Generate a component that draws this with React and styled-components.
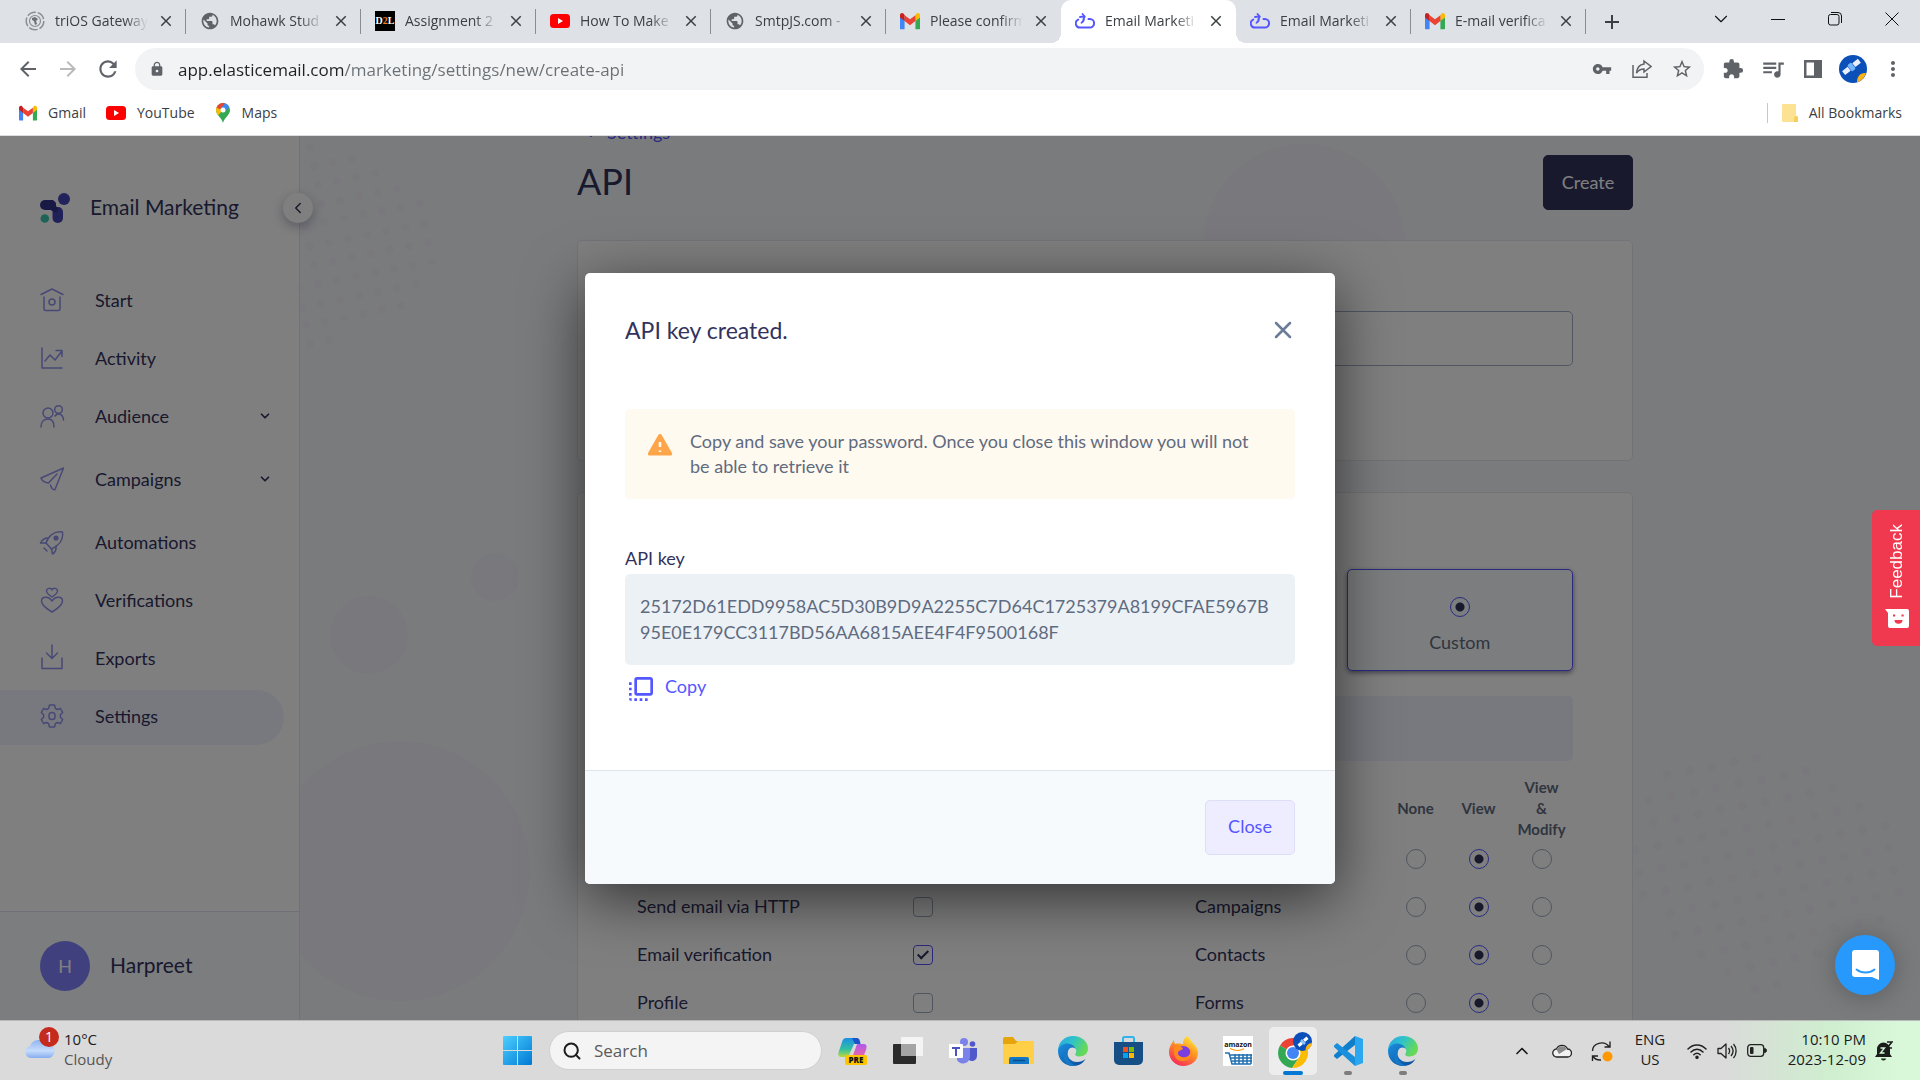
import React from "react";
import styled, { createGlobalStyle, css } from "styled-components";
import {
  MdArrowBack, MdArrowForward, MdRefresh, MdLock, MdVpnKey, MdStarBorder, MdExtension,
  MdQueueMusic, MdMoreVert, MdPublic, MdFlipToFront, MdClose, MdAdd,
} from "react-icons/md";
import { ChevronDown, ChevronLeft, ChevronUp, Search, X } from "lucide-react";

const uiFont = '"Open Sans", "Noto Sans", sans-serif';
const appFont = 'Lato, "Open Sans", sans-serif';
const primary = "#5457ff";
const navy = "#32325d";
const slate = "#5f6b7f";

const GlobalStyle = createGlobalStyle`
  *, *::before, *::after { box-sizing: border-box; }
  body { margin: 0; overflow: hidden; font-family: ${uiFont}; }
  button, input { font: inherit; color: inherit; }
  button { border: 0; background: none; padding: 0; cursor: pointer; }
  a { color: inherit; text-decoration: none; }
  svg { display: block; flex: none; }
`;

const Screen = styled.div`
  display: flex;
  flex-direction: column;
  height: 100vh;
`;

/* ---------- Browser chrome ---------- */

const TabStrip = styled.div`
  display: flex;
  align-items: stretch;
  height: 43px;
  padding-left: 11px;
  background: #dee1e6;
  color: #3c4043;
`;

const Tab = styled.div`
  position: relative;
  display: flex;
  align-items: center;
  flex: 0 1 175px;
  min-width: 0;
  padding: 0 12px 2px 14px;
  gap: 10px;
  font-size: 14px;
  ${(p) => p.$divider && css`
    &::after {
      content: "";
      position: absolute;
      right: 0;
      top: 9px;
      width: 1px;
      height: 25px;
      background: #8a8d92;
    }
  `}
  ${(p) => p.$active && css`
    background: #fff;
    border-radius: 10px 10px 0 0;
    &::before, &::after {
      content: "";
      position: absolute;
      bottom: 0;
      width: 10px;
      height: 10px;
    }
    &::before { left: -10px; background: radial-gradient(circle at 0 0, transparent 10px, #fff 10px); }
    &::after { right: -10px; background: radial-gradient(circle at 100% 0, transparent 10px, #fff 10px); }
  `}
`;

const TabTitle = styled.span`
  flex: 1;
  min-width: 0;
  overflow: hidden;
  white-space: nowrap;
  mask-image: linear-gradient(90deg, #000 75%, transparent);
`;

const TabClose = styled.button`
  display: flex;
  width: 16px;
  justify-content: center;
`;

const NewTab = styled.button`
  display: flex;
  align-items: center;
  justify-content: center;
  width: 52px;
`;

const WindowControls = styled.div`
  display: flex;
  margin-left: auto;
  color: #111;
`;

const WindowButton = styled.button`
  display: flex;
  align-items: center;
  justify-content: center;
  width: 57px;
  height: 38px;
`;

const Toolbar = styled.div`
  display: flex;
  align-items: center;
  height: 52px;
  padding: 0 7px 0 8px;
  background: #fff;
  color: #5f6368;
`;

const ToolButton = styled.button`
  display: flex;
  align-items: center;
  justify-content: center;
  width: 40px;
  height: 40px;
  color: ${(p) => (p.$muted ? "#bababc" : "inherit")};
`;

const AddressBar = styled.div`
  display: flex;
  align-items: center;
  flex: 1;
  height: 42px;
  margin: 0 9px 0 7px;
  padding: 0 2px 0 14px;
  border-radius: 21px;
  background: #f1f3f4;
`;

const AddressInput = styled.input`
  flex: 1;
  min-width: 0;
  height: 30px;
  margin-left: 13px;
  padding: 0;
  border: 0;
  outline: 0;
  font-size: 17px;
  background: linear-gradient(90deg, #202124 166px, #6b7075 166px);
  background-clip: text;
  -webkit-text-fill-color: transparent;
`;

const Bookmarks = styled.nav`
  display: flex;
  align-items: center;
  height: 41px;
  padding: 0 18px 5px 19px;
  gap: 20px;
  border-bottom: 1px solid #dadce0;
  background: #fff;
  color: #3c4043;
  font-size: 14px;
`;

const Bookmark = styled.a`
  display: flex;
  align-items: center;
  gap: 11px;
  ${(p) => p.$end && css`
    margin-left: auto;
    padding-left: 14px;
    border-left: 1px solid #c4c7cb;
    height: 20px;
  `}
`;

/* ---------- Web page ---------- */

const Page = styled.div`
  position: relative;
  display: flex;
  flex: 1;
  min-height: 0;
  overflow: hidden;
  font-family: ${appFont};
  color: ${navy};
`;

const Sidebar = styled.aside`
  position: relative;
  z-index: 1;
  display: flex;
  flex-direction: column;
  flex: none;
  width: 300px;
  border-right: 1px solid #e0e4ee;
  background: #fff;
`;

const Brand = styled.div`
  display: flex;
  align-items: center;
  gap: 20px;
  padding: 55px 0 2px 40px;
  font-size: 21px;
  line-height: 32px;
  span { padding-bottom: 2px; }
`;

const CollapseButton = styled.button`
  position: absolute;
  top: 57px;
  right: -14px;
  display: flex;
  align-items: center;
  justify-content: center;
  width: 30px;
  height: 30px;
  border-radius: 50%;
  background: #fff;
  box-shadow: 0 4px 12px rgba(50, 50, 93, 0.35);
`;

const Nav = styled.nav`
  display: flex;
  flex-direction: column;
  padding: 47px 15px 0 0;
`;

const NavItem = styled.a`
  display: flex;
  align-items: center;
  gap: 31px;
  height: 55px;
  margin-bottom: ${(p) => (p.$expandable ? "8px" : "3px")};
  padding: 0 12px 4px 40px;
  border-radius: 0 28px 28px 0;
  background: ${(p) => (p.$active ? "#f1f3fe" : "transparent")};
  font-size: 18px;
  & > svg:last-child:not(:first-child) { margin-left: auto; }
`;

const NavIcon = styled.svg`
  width: 24px;
  height: 24px;
  overflow: visible;
  fill: none;
  stroke: #8f91ea;
  stroke-width: 1.5;
  stroke-linecap: round;
  stroke-linejoin: round;
`;

const Account = styled.div`
  display: flex;
  align-items: center;
  gap: 20px;
  height: 109px;
  margin-top: auto;
  padding-left: 40px;
  border-top: 1px solid #dfe3ec;
  background: #f6fafd;
  font-size: 21px;
  & > span:last-child { padding-bottom: 3px; }
`;

const Avatar = styled.span`
  display: flex;
  align-items: center;
  justify-content: center;
  width: 50px;
  height: 50px;
  border-radius: 50%;
  background: #7f80fb;
  color: #fff;
  font-size: 18px;
`;

const Main = styled.main`
  position: relative;
  flex: 1;
  min-width: 0;
  padding: 0 40px 0 30px;
  overflow: hidden;
  background: #f4f7fa;
`;

const Decor = styled.svg`
  position: absolute;
  top: 0;
  ${(p) => p.$side}: 0;
  width: ${(p) => p.$width}px;
  height: 884px;
  fill: #f3f0f9;
`;

const Content = styled.div`
  position: relative;
  max-width: 1056px;
  margin: -18px auto 0;
`;

const BackLink = styled.a`
  display: inline-flex;
  align-items: center;
  gap: 10px;
  padding-left: 4px;
  color: ${primary};
  font-size: 18px;
  line-height: 28px;
`;

const PageHeader = styled.header`
  display: flex;
  align-items: center;
  justify-content: space-between;
  margin: 9px 0 30px;
  h1 { margin: 0; padding-bottom: 4px; font-size: 36px; font-weight: 400; line-height: 44px; }
`;

const Button = styled.button`
  min-width: 90px;
  height: 55px;
  padding: 0 16px 2px;
  border-radius: 5px;
  border: 1px solid ${(p) => (p.$soft ? "#dddef8" : navy)};
  background: ${(p) => (p.$soft ? "#ededff" : navy)};
  color: ${(p) => (p.$soft ? primary : "#fff")};
  font-size: 18px;
`;

const Card = styled.section`
  margin-bottom: 31px;
  padding: ${(p) => p.$padTop}px 59px 94px;
  border: 1px solid #e3e7ef;
  border-radius: 5px;
  background: #fff;
`;

const NameInput = styled.input`
  display: block;
  width: 100%;
  height: 55px;
  padding: 0 16px;
  border: 1px solid #a3afc4;
  border-radius: 5px;
  background: #fff;
`;

const AccessGrid = styled.div`
  display: grid;
  grid-template-columns: repeat(4, 1fr);
  gap: 10px;
`;

const AccessOption = styled.label`
  display: flex;
  flex-direction: column;
  align-items: center;
  gap: 14px;
  height: 102px;
  padding-top: 27px;
  border: 1px solid ${(p) => (p.$selected ? primary : "#e3e7ef")};
  border-radius: 5px;
  background: ${(p) => (p.$selected ? "#f6fafd" : "#fff")};
  box-shadow: ${(p) => (p.$selected ? "0 2px 5px rgba(50, 50, 93, 0.6)" : "none")};
  color: ${slate};
  font-size: 18px;
`;

const Banner = styled.div`
  height: 65px;
  margin: 25px 0 13px;
  border-radius: 5px;
  background: #f1f3fe;
`;

const Permissions = styled.div`
  display: flex;
  align-items: flex-end;
  justify-content: space-between;
`;

const Table = styled.table`
  width: 378px;
  border-collapse: collapse;
  table-layout: fixed;
  font-size: 18px;
  line-height: 20px;
  th, td { padding: 0; }
  thead th {
    height: 69px;
    color: ${slate};
    font-size: 15px;
    font-weight: 700;
    line-height: 21px;
  }
  tbody tr { height: 48px; }
  tbody th { padding-top: 5px; text-align: left; vertical-align: top; font-weight: 400; }
  tbody td { padding-top: 6px; vertical-align: top; }
`;

const LabelCol = styled.col`
  width: ${(p) => p.$w}px;
`;

const Radio = styled.input.attrs({ type: "radio" })`
  appearance: none;
  display: block;
  width: 20px;
  height: 20px;
  margin: 0 auto;
  border: 1px solid #a0acbc;
  border-radius: 50%;
  &:checked {
    border-color: ${primary};
    background: radial-gradient(circle, ${navy} 4px, transparent 5px);
  }
`;

const AccessRadio = styled(Radio)`
  flex: none;
`;

const Checkbox = styled.input.attrs({ type: "checkbox" })`
  appearance: none;
  position: relative;
  display: block;
  width: 20px;
  height: 20px;
  margin: 0;
  border: 1px solid #a0acbc;
  border-radius: 4px;
  &:checked { border-color: ${primary}; }
  &:checked::after {
    content: "";
    position: absolute;
    left: 6px;
    top: 2px;
    width: 6px;
    height: 11px;
    border: solid ${navy};
    border-width: 0 2px 2px 0;
    transform: rotate(45deg);
  }
`;

const Backdrop = styled.div`
  position: absolute;
  inset: 0;
  z-index: 2;
  display: flex;
  align-items: center;
  justify-content: center;
  background: rgba(0, 0, 0, 0.5);
`;

const Dialog = styled.div`
  width: 750px;
  border-radius: 5px;
  overflow: hidden;
  background: #fff;
  box-shadow: 0 14px 60px rgba(0, 0, 0, 0.6);
`;

const DialogHeader = styled.div`
  display: flex;
  align-items: center;
  justify-content: space-between;
  padding: 42px 38px 0 40px;
  h2 { margin: 0; font-size: 23px; font-weight: 400; line-height: 30px; }
  button { display: flex; color: #6b7c98; }
`;

const DialogBody = styled.div`
  padding: 64px 40px 65px;
  font-size: 18px;
`;

const Alert = styled.div`
  display: flex;
  gap: 17px;
  min-height: 90px;
  padding: 20px 30px 20px 22px;
  border-radius: 5px;
  background: #fffaf0;
  color: ${slate};
  line-height: 25px;
  svg { margin-top: 4px; }
  p { margin: 0; }
`;

const FieldLabel = styled.div`
  margin-top: 45px;
  padding-bottom: 2px;
  line-height: 28px;
  font-size: 18px;
`;

const KeyValue = styled.output`
  display: block;
  min-height: 91px;
  padding: 19px 25px 20px 15px;
  border-radius: 5px;
  background: #ecf1f6;
  color: ${slate};
  line-height: 26px;
  word-break: break-all;
`;

const CopyButton = styled.button`
  display: flex;
  align-items: center;
  gap: 8px;
  height: 32px;
  margin: 8px 0 0;
  color: ${primary};
  span { padding-bottom: 6px; }
`;

const DialogFooter = styled.div`
  display: flex;
  justify-content: flex-end;
  padding: 29px 40px;
  border-top: 1px solid #dfe4ec;
  background: #f6fafd;
  font-size: 18px;
`;

const FeedbackTab = styled.button`
  position: absolute;
  z-index: 3;
  right: 0;
  top: 374px;
  display: flex;
  flex-direction: column;
  align-items: center;
  justify-content: space-between;
  width: 48px;
  height: 136px;
  padding: 14px 0 17px 2px;
  border-radius: 5px 0 0 5px;
  background: #f0394f;
  color: #fff;
  font-family: "Liberation Sans", sans-serif;
  font-size: 17px;
  line-height: 20px;
  span { writing-mode: vertical-rl; transform: rotate(180deg); }
`;

const ChatButton = styled.button`
  position: absolute;
  z-index: 3;
  right: 25px;
  bottom: 25px;
  display: flex;
  align-items: center;
  justify-content: center;
  width: 60px;
  height: 60px;
  border-radius: 50%;
  background: #2799fc;
  box-shadow: 0 2px 24px rgba(0, 0, 0, 0.25);
`;

/* ---------- Taskbar ---------- */

const Taskbar = styled.footer`
  display: grid;
  grid-template-columns: 1fr auto 1fr;
  align-items: center;
  height: 60px;
  border-top: 1px solid #b9b9b9;
  background: linear-gradient(270deg, #d9f8da 20px, #cfeecf 90px, #dadada 200px);
  color: #1c1c1c;
`;

const TaskSide = styled.div`
  display: flex;
  align-items: center;
  ${(p) => p.$end && css`justify-content: flex-end; padding-right: 18px;`}
`;

const Weather = styled.button`
  display: flex;
  align-items: center;
  gap: 9px;
  padding: 0 0 3px 25px;
  text-align: left;
  font-size: 15px;
  line-height: 20px;
  small { display: block; font-size: 15px; color: #555; }
`;

const WeatherArt = styled.span`
  position: relative;
  margin-bottom: 2px;
`;

const Badge = styled.span`
  position: absolute;
  top: -11px;
  right: -4px;
  width: 20px;
  height: 20px;
  border-radius: 50%;
  background: #c42b1c;
  color: #fff;
  font-size: 14px;
  line-height: 20px;
  text-align: center;
`;

const TaskCenter = styled.div`
  display: flex;
  align-items: center;
`;

const SearchBox = styled.label`
  display: flex;
  align-items: center;
  gap: 12px;
  width: 273px;
  height: 39px;
  margin-left: 8px;
  padding: 0 12px;
  border: 1px solid #cfcfcf;
  border-radius: 20px;
  background: #f4f4f4;
  input {
    flex: 1;
    min-width: 0;
    padding: 0;
    border: 0;
    outline: 0;
    background: none;
    font-size: 17px;
  }
  input::placeholder { color: #5a5a5a; opacity: 1; }
`;

const TaskButton = styled.button`
  position: relative;
  display: flex;
  align-items: center;
  justify-content: center;
  width: 48px;
  height: 48px;
  margin-left: ${(p) => (p.$start ? "0" : "7px")};
  border-radius: 5px;
  background: ${(p) => (p.$active ? "#ededed" : "transparent")};
  ${(p) => (p.$active || p.$running) && css`
    &::after {
      content: "";
      position: absolute;
      bottom: 0;
      width: ${p.$active ? 20 : 8}px;
      height: 4px;
      border-radius: 2px;
      background: ${p.$active ? "#0078d4" : "#7d7d7d"};
    }
  `}
`;

const TrayButton = styled.button`
  display: flex;
  align-items: center;
  justify-content: ${(p) => (p.$clock ? "flex-end" : "center")};
  width: ${(p) => p.$w}px;
  height: 48px;
  padding-bottom: ${(p) => (p.$text || p.$clock ? "3px" : "0")};
  font-size: 15px;
  line-height: 20px;
  text-align: ${(p) => (p.$clock ? "right" : "center")};
`;

/* ---------- Drawings ---------- */

const Gmail = ({ size = 18 }) => (
  <svg width={size} height={size} viewBox="0 0 24 24">
    <path d="M0 20V5l5.500 4v13H1.600A1.600 1.600 0 0 1 0 20z" fill="#4285f4" />
    <path d="M24 20V5l-5.500 4v13h3.900a1.600 1.600 0 0 0 1.600-2z" fill="#34a853" />
    <path d="M18.500 5v7L24 7.800V5.200c0-2.600-2.400-3.400-4.200-2.100z" fill="#fbbc04" />
    <path d="M5.500 12V5L12 9.800 18.500 5v7L12 17z" fill="#ea4335" />
    <path d="M0 5.200v2.600L5.500 12V5L4.200 3.100C2.400 1.800 0 2.600 0 5.200z" fill="#c5221f" />
  </svg>
);

const YouTube = () => (
  <svg width="20" height="16" viewBox="0 0 20 16">
    <rect y="1" width="20" height="14" rx="3.500" fill="#f00" />
    <path d="M8 5v6l5-3z" fill="#fff" />
  </svg>
);

const MapsPin = () => (
  <svg width="16" height="20" viewBox="0 0 16 20">
    <path d="M8 20C7 15 1 12 1 7a7 7 0 0 1 14 0c0 5-6 8-7 13z" fill="#34a853" />
    <path d="M1.500 9.500C.5 6 1.300 4 3 2.200L8 7l-5 5.500z" fill="#fbbc04" />
    <path d="M3 2.200A7 7 0 0 1 10 .3L5 6.500 1.600 4.500z" fill="#ea4335" />
    <path d="M10 .3A7 7 0 0 1 14.200 4L8.500 10 5.500 6z" fill="#4285f4" />
    <circle cx="8" cy="7" r="2.500" fill="#fff" />
  </svg>
);

const Elastic = () => (
  <svg width="20" height="18" viewBox="0 0 20 18" fill="none" stroke="#5457ff" strokeWidth="2" strokeLinecap="round" strokeLinejoin="round">
    <path d="M13.500 7h1.300a4.200 4.200 0 0 1 0 8.600H5.200A4.200 4.200 0 0 1 3.200 7.600" />
    <path d="M6.500 10.800c1.800-1 2.600-2.800 2.400-5.300M5 5l4.200-.6M7.500 2l2.300 2.500-1.500 2.700" strokeWidth="1.800" />
  </svg>
);

const Seal = () => (
  <svg width="20" height="20" viewBox="0 0 20 20" fill="none" stroke="#8b8e92">
    <circle cx="10" cy="10" r="8.800" strokeWidth="1.500" strokeDasharray="9 2" />
    <circle cx="10" cy="10" r="5.500" strokeWidth="1.200" />
    <path d="M7 7l3-1 3 2-2 2 1 3-2 1-1-4-2-1z" fill="#6d7074" stroke="none" />
  </svg>
);

const D2LBox = styled.span`
  width: 20px;
  height: 20px;
  flex: none;
  background: #000;
  color: #fff;
  font: 700 10px/20px "Liberation Serif", serif;
  text-align: center;
  i { color: #f0822d; font-style: normal; }
`;

const Astronaut = () => (
  <svg width="28" height="28" viewBox="0 0 28 28">
    <circle cx="14" cy="14" r="14" fill="#0b4fb8" />
    <path d="M27 18a14 14 0 0 1-9 9.400c0-6 3-10 9-9.400z" fill="#fbb416" />
    <g transform="rotate(-38 12 13)">
      <rect x="3" y="10" width="7" height="5" fill="#e8f0ff" />
      <rect x="16" y="10" width="7" height="5" fill="#e8f0ff" />
      <rect x="10.500" y="8.500" width="5" height="8" rx="1.500" fill="#76b6ff" />
    </g>
  </svg>
);

const Folder = () => (
  <svg width="16" height="18" viewBox="0 0 16 18">
    <path d="M1 0h13v12h2v6H1a1 1 0 0 1-1-1V1a1 1 0 0 1 1-1z" fill="#fde293" />
    <path d="M12 18v-4a2 2 0 0 1 4 0v4z" fill="#f6cf5b" />
  </svg>
);

const Logo = () => (
  <svg width="30" height="30" viewBox="0 0 30 30">
    <circle cx="24" cy="6" r="6" fill="#4546b8" />
    <rect x="0" y="7" width="16" height="10" rx="5" fill="#32328c" />
    <rect x="12.500" y="14" width="10.500" height="16" rx="5" fill="#4242b4" />
    <path d="M10 7c4 0 6 2 6 5 0 2 1 2.500 3 2.500l-2 5-4-1-3-2z" fill="#32328c" />
    <circle cx="4.800" cy="25.500" r="4.300" fill="#3fc6b0" />
  </svg>
);

const navGlyphs = {
  Start: <><path d="M1 6.500L12 1l11 5.500M4 9v12a1.500 1.500 0 0 0 1.500 1.500h13A1.500 1.500 0 0 0 20 21V9" /><circle cx="12" cy="14" r="3" /></>,
  Activity: <path d="M2 2v20h20M5 15l5-6 5 5 7-9M16 4.500h6v6" />,
  Audience: <><circle cx="8" cy="9" r="5" /><path d="M1 23c0-5 3-8 7-8s6 3 6 8" /><circle cx="18.500" cy="5.500" r="3.800" /><path d="M15 12c3-4 8-2 8.500 4" /></>,
  Campaigns: <><path d="M23.500 1L1 11c1 3 4 4.500 7.500 5L17 7M23.500 1L15 22.500c-2 1-4-2-4.500-4.500" /></>,
  Automations: <><path d="M6 13C8 6 14 1 22.500 2c1 8-4 14-11 17z" /><circle cx="16" cy="8" r="1.800" fill="#8f91ea" /><path d="M8 8c-4 0-6 2-7.500 5L6 13M16 16c.5 4-1 6.500-3.500 8l-1-5M4 18l3 3" /></>,
  Verifications: <><path d="M12 9C9 7 6 5 6.500 2.500S11-.5 12 2c1-2.500 5-2 5.500.5S15 7 12 9z" /><path d="M12 24C6 20.500 1 17 1.500 12.500S9 8 12 13c3-5 10-5 10.500-.5S18 20.500 12 24z" /></>,
  Exports: <path d="M2 12v10.500h20V12M12-1v13M6.500 7L12 12.500 17.500 7" />,
  Settings: <><path d="M9.500 1h5l.8 3.300 2 1.200 3.200-1 2.200 4-2.300 2.300v2.400l2.300 2.300-2.200 4-3.200-1-2 1.200-.8 3.300h-5l-.8-3.300-2-1.200-3.200 1-2.200-4 2.300-2.300v-2.400L1.300 8.500l2.200-4 3.200 1 2-1.200z" /><rect x="9" y="8.500" width="6" height="7" rx="2.800" /></>,
};

const leftRows = [
  [310, 11, 1], [314, 30, 3], [318, 49, 4], [321, 68, 5], [306, 90, 7], [310, 110, 7],
  [314, 129, 7], [299, 152, 8], [302, 171, 7], [306, 189, 6], [310, 208, 2],
];
const rightRows = [
  [1667, 639, 5], [1649, 665, 8], [1653, 687, 9], [1635, 714, 11], [1639, 737, 12], [1643, 759, 12],
  [1670, 777, 11], [1675, 799, 11], [1701, 818, 9], [1728, 835, 5], [1755, 853, 2],
];

const Dots = ({ rows, originX, stepX, stepY, r }) =>
  rows.flatMap(([x, y, n]) =>
    Array.from({ length: n }, (_, i) => (
      <circle key={`${x}-${y}-${i}`} cx={x - originX + i * stepX} cy={y - i * stepY} r={r} />
    ))
  );

const WindowsLogo = () => (
  <svg width="29" height="29" viewBox="0 0 29 29">
    <defs>
      <linearGradient id="win" x1="0" y1="0" x2="1" y2="1">
        <stop offset="0" stopColor="#4cd0ff" />
        <stop offset="1" stopColor="#0078d4" />
      </linearGradient>
    </defs>
    <path fill="url(#win)" d="M1 0h13v14H0V1a1 1 0 0 1 1-1zM15 0h13a1 1 0 0 1 1 1v13H15zM0 15h14v14H1a1 1 0 0 1-1-1zM15 15h14v13a1 1 0 0 1-1 1H15z" />
  </svg>
);

const Copilot = () => (
  <svg width="30" height="30" viewBox="0 0 30 30">
    <defs>
      <linearGradient id="cpa" x1="0" y1="0" x2="0" y2="1"><stop offset="0" stopColor="#1a8fe8" /><stop offset=".6" stopColor="#35c0a0" /><stop offset="1" stopColor="#b8dc3c" /></linearGradient>
      <linearGradient id="cpb" x1="0" y1="0" x2="0" y2="1"><stop offset="0" stopColor="#b05af0" /><stop offset="1" stopColor="#f2679a" /></linearGradient>
    </defs>
    <path d="M8 2h10c3 0 3 3 4 6h-6l-4 9c-1 3-2 4-5 4H3c-3 0-3-3-2-6L4 6c1-3 2-4 4-4z" fill="url(#cpa)" />
    <path d="M14 2h5c2 0 3 2 3.500 6H17z" fill="#1b53c8" />
    <path d="M20 8h6c3 0 3 3 2 6l-2 5c-1 3-2 3-4 3h-8l4-11c.5-2 1-3 2-3z" fill="url(#cpb)" />
    <rect x="7" y="19" width="22" height="10" rx="2" fill="#ffc400" />
    <text x="18" y="27" textAnchor="middle" fontFamily="Open Sans, sans-serif" fontWeight="800" fontSize="8" fill="#111">PRE</text>
  </svg>
);

const TaskView = () => (
  <svg width="30" height="30" viewBox="0 0 30 30">
    <rect x="0" y="8" width="23" height="20" rx="1" fill="#2b2b2b" />
    <rect x="8" y="1" width="22" height="19" rx="1" fill="#f4f4f4" />
    <rect x="8" y="8" width="15" height="12" fill="#a4a4a4" />
  </svg>
);

const Teams = () => (
  <svg width="28" height="28" viewBox="0 0 28 28">
    <circle cx="15" cy="5" r="4" fill="#7b83eb" /><circle cx="23.500" cy="7" r="2.800" fill="#5059c9" />
    <path d="M18 11h10v8a5 5 0 0 1-8 4z" fill="#5059c9" />
    <path d="M8 11h13v9a7 7 0 0 1-13 3z" fill="#7b83eb" />
    <rect x="0" y="7" width="14" height="14" rx="1" fill="#fff" />
    <path d="M3 10h8v2H8v7H6v-7H3z" fill="#4b53bc" />
  </svg>
);

const Explorer = () => (
  <svg width="31" height="28" viewBox="0 0 31 28">
    <path d="M0 2a2 2 0 0 1 2-2h8l3 4h17v8H0z" fill="#e5a50a" />
    <path d="M0 7h12l3-3h14a2 2 0 0 1 2 2v20a1 1 0 0 1-1 1H1a1 1 0 0 1-1-1z" fill="#ffcf48" />
    <path d="M6 27v-5a2 2 0 0 1 2-2h16a2 2 0 0 1 2 2v5z" fill="#1277c6" />
    <path d="M10 23.500h12" stroke="#0b4f8a" strokeWidth="1.500" />
  </svg>
);

const Edge = () => (
  <svg width="30" height="30" viewBox="0 0 30 30">
    <defs>
      <linearGradient id="edgeTop" x1="0" y1="0" x2="1" y2=".4"><stop offset="0" stopColor="#2aa4e8" /><stop offset=".5" stopColor="#2fc3c9" /><stop offset="1" stopColor="#66d957" /></linearGradient>
      <linearGradient id="edgeLow" x1="0" y1="0" x2="1" y2="1"><stop offset="0" stopColor="#1b8fe0" /><stop offset="1" stopColor="#0c4a96" /></linearGradient>
    </defs>
    <path d="M0 15C0 6 7 0 15 0c9 0 15 6 15 12.500 0 5-4 8-8.500 8-3.500 0-5-1.500-4-3 1.500-2 1-6-3-6.500C8 10 2 13 0 15z" fill="url(#edgeTop)" />
    <path d="M0 15c1-6 7-8.500 12-7 3 .8 5 3 5.500 5-2-2.500-6-2-7.500 2-2 6 3 11 9 11 3.500 0 6-1 8.500-3C25 27.500 20.500 30 15 30 6.500 30 0 23.500 0 15z" fill="url(#edgeLow)" />
    <path d="M10 15c-3 7 2 13.500 9 14.500-5 1.500-13-.5-13-8 0-3 1.500-5.500 4-6.500z" fill="#1479c9" />
  </svg>
);

const Store = () => (
  <svg width="29" height="29" viewBox="0 0 29 29">
    <path d="M9 7V2.500C9 1.500 9.500 1 10.500 1h8c1 0 1.500.5 1.500 1.500V7" fill="none" stroke="#2fb4f0" strokeWidth="2" />
    <path d="M0 6h29v18a5 5 0 0 1-5 5H5a5 5 0 0 1-5-5z" fill="#164f85" />
    <path d="M9 11h5v5H9z" fill="#f25022" /><path d="M15 11h5v5h-5z" fill="#7fba00" />
    <path d="M9 17h5v5H9z" fill="#00a4ef" /><path d="M15 17h5v5h-5z" fill="#ffb900" />
  </svg>
);

const Firefox = () => (
  <svg width="29" height="30" viewBox="0 0 29 30">
    <defs><linearGradient id="ff" x1=".8" y1="0" x2=".2" y2="1"><stop offset="0" stopColor="#fff04a" /><stop offset=".4" stopColor="#ff9a1f" /><stop offset="1" stopColor="#f5215f" /></linearGradient></defs>
    <path d="M18 0c4 3 4 5 6 7 3 3 5 6 5 10 0 8-7 13-14.500 13S0 24 0 16C0 11 3 7 5 4c0 2 .5 3 1 4 4-1 6 0 8 0 0-3 1-6 4-8z" fill="url(#ff)" />
    <circle cx="14.500" cy="17" r="7" fill="#7a3ee0" />
    <path d="M6 9c4 0 5 2 8 3-1 3-5 2-5 5s4 5 8 4c4-1 5-5 4-9 3 4 2 12-6 13S3 19 6 9z" fill="#ff8a1c" />
  </svg>
);

const Amazon = () => (
  <svg width="30" height="30" viewBox="0 0 30 30">
    <rect width="30" height="30" fill="#fff" />
    <text x="15" y="11" textAnchor="middle" fontFamily="Open Sans, sans-serif" fontWeight="700" fontSize="7" fill="#111">amazon</text>
    <path d="M7 12.500c5 2.500 10 2.500 14 .3" stroke="#f90" strokeWidth="1.200" fill="none" />
    <path d="M2 17h4l3 11h19M7 19h22M8 22h21M9 25h20M12 18v10M16 18v10M20 18v10M24 18v10M28 18v10" stroke="#1f6fb0" strokeWidth="1.500" fill="none" />
  </svg>
);

const Chrome = () => (
  <svg width="38" height="38" viewBox="0 0 38 38">
    <path d="M19 21L6 13.500A15 15 0 0 1 32 13.500H19z" fill="#ea4335" />
    <path d="M19 21L6 13.500a15 15 0 0 0 12 22.400L25.500 24.700z" fill="#34a853" />
    <path d="M19 21h0l6.500 3.700L18 35.900a15 15 0 0 0 14-22.400H19z" fill="#fbbc04" />
    <circle cx="19" cy="21" r="7.500" fill="#fff" /><circle cx="19" cy="21" r="6" fill="#4285f4" />
    <circle cx="28.500" cy="9.500" r="9.500" fill="#0b4fb8" />
    <path d="M38 11a9.500 9.500 0 0 1-6.500 7.500c0-4 2-7 6.500-7.500z" fill="#fbb416" />
    <path d="M23.500 12.500l3.500-3 2 2.500-3.500 3zM29 7.500l3.500-3 2 2.500L31 10z" fill="#fff" /><path d="M27 8l4 4" stroke="#8cc4ff" strokeWidth="2.500" />
  </svg>
);

const VSCode = () => (
  <svg width="30" height="30" viewBox="0 0 30 30">
    <path d="M22 0l8 3v24l-8 3z" fill="#2ba7ef" />
    <path d="M22 0v9L4 23l-3-2.500V19z" fill="#0f7fcc" />
    <path d="M22 30v-9L4 7 1 9.500V11z" fill="#1a8fdc" />
  </svg>
);

const Cloud = () => (
  <svg width="30" height="20" viewBox="0 0 30 20">
    <defs><linearGradient id="cl" x1="0" y1="0" x2="0" y2="1"><stop offset="0" stopColor="#8fb6f2" /><stop offset=".6" stopColor="#c6dcfb" /><stop offset="1" stopColor="#86acf0" /></linearGradient></defs>
    <path d="M6 20a6 6 0 0 1-1-11.800A9 9 0 0 1 21 6a7 7 0 0 1 3 14z" fill="url(#cl)" />
  </svg>
);

/* ---------- Data ---------- */

const tabs = [
  { icon: <Seal />, title: "triOS Gateway" },
  { icon: <MdPublic size={20} color="#5f6368" />, title: "Mohawk Stud" },
  { icon: <D2LBox>D<i>2</i>L</D2LBox>, title: "Assignment 2" },
  { icon: <YouTube />, title: "How To Make" },
  { icon: <MdPublic size={20} color="#5f6368" />, title: "SmtpJS.com -" },
  { icon: <Gmail size={20} />, title: "Please confirm", plain: true },
  { icon: <Elastic />, title: "Email Marketi", active: true },
  { icon: <Elastic />, title: "Email Marketi" },
  { icon: <Gmail size={20} />, title: "E-mail verifica" },
];

const navItems = [
  { name: "Start" }, { name: "Activity" }, { name: "Audience", expandable: true },
  { name: "Campaigns", expandable: true }, { name: "Automations" }, { name: "Verifications" },
  { name: "Exports" }, { name: "Settings", active: true },
];

const features = [
  { name: "" }, { name: "Send email via HTTP" }, { name: "Email verification", checked: true }, { name: "Profile" },
];
const resources = ["", "Campaigns", "Contacts", "Forms"];
const apiKey = "25172D61EDD9958AC5D30B9D9A2255C7D64C1725379A8199CFAE5967B95E0E179CC3117BD56AA6815AEE4F4F9500168F";

const apps = [
  { name: "Copilot", icon: <Copilot /> }, { name: "Task view", icon: <TaskView /> }, { name: "Teams", icon: <Teams /> },
  { name: "File Explorer", icon: <Explorer /> }, { name: "Edge", icon: <Edge /> }, { name: "Store", icon: <Store /> },
  { name: "Firefox", icon: <Firefox /> }, { name: "Amazon", icon: <Amazon /> },
  { name: "Chrome", icon: <Chrome />, active: true }, { name: "VS Code", icon: <VSCode />, running: true },
  { name: "Edge profile", icon: <Edge />, running: true },
];

function BrowserChrome() {
  return (
    <header>
      <TabStrip role="tablist">
        {tabs.map((t, i) => (
          <Tab key={i} role="tab" aria-selected={!!t.active} $active={t.active} $divider={!t.active && !t.plain}>
            {t.icon}
            <TabTitle>{t.title}</TabTitle>
            <TabClose aria-label="Close tab"><MdClose size={18} /></TabClose>
          </Tab>
        ))}
        <NewTab aria-label="New tab"><MdAdd size={24} /></NewTab>
        <WindowControls>
          <WindowButton aria-label="Search tabs"><ChevronDown size={22} strokeWidth={1.2} /></WindowButton>
          <WindowButton aria-label="Minimize"><svg width="14" height="14"><path d="M0 7.500h14" stroke="#111" /></svg></WindowButton>
          <WindowButton aria-label="Restore">
            <svg width="14" height="14" fill="none" stroke="#111"><rect x=".5" y="2.500" width="10.500" height="10.500" rx="2" /><path d="M3 .5h7A3.500 3.500 0 0 1 13.500 4v7" /></svg>
          </WindowButton>
          <WindowButton aria-label="Close"><svg width="14" height="14" stroke="#111"><path d="M.5.5l13 13M13.500.5l-13 13" /></svg></WindowButton>
        </WindowControls>
      </TabStrip>
      <Toolbar>
        <ToolButton aria-label="Back"><MdArrowBack size={24} /></ToolButton>
        <ToolButton aria-label="Forward" $muted><MdArrowForward size={24} /></ToolButton>
        <ToolButton aria-label="Reload"><MdRefresh size={26} /></ToolButton>
        <AddressBar>
          <MdLock size={16} />
          <AddressInput aria-label="Address" defaultValue="app.elasticemail.com/marketing/settings/new/create-api" />
          <ToolButton aria-label="Passwords"><MdVpnKey size={20} /></ToolButton>
          <ToolButton aria-label="Share">
            <svg width="20" height="20" viewBox="0 0 20 20" fill="none" stroke="currentColor" strokeWidth="1.500">
              <path d="M1 6v12.200h14V14" /><path d="M12 2l7 5.500-7 5.500V10c-3 0-5.500 1-7.500 4C5 9 7.500 5.500 12 5z" />
            </svg>
          </ToolButton>
          <ToolButton aria-label="Bookmark"><MdStarBorder size={22} /></ToolButton>
        </AddressBar>
        <ToolButton aria-label="Extensions"><MdExtension size={22} /></ToolButton>
        <ToolButton aria-label="Media"><MdQueueMusic size={26} /></ToolButton>
        <ToolButton aria-label="Side panel">
          <svg width="18" height="18" fill="currentColor"><path d="M0 0h18v18H0zM2.500 2.500v13H10v-13z" fillRule="evenodd" /></svg>
        </ToolButton>
        <ToolButton aria-label="Profile"><Astronaut /></ToolButton>
        <ToolButton aria-label="Menu"><MdMoreVert size={24} /></ToolButton>
      </Toolbar>
      <Bookmarks>
        <Bookmark href="#gmail"><Gmail />Gmail</Bookmark>
        <Bookmark href="#youtube"><YouTube />YouTube</Bookmark>
        <Bookmark href="#maps"><MapsPin />Maps</Bookmark>
        <Bookmark href="#all" $end><Folder />All Bookmarks</Bookmark>
      </Bookmarks>
    </header>
  );
}

function SideNav() {
  return (
    <Sidebar>
      <Brand><Logo /><span>Email Marketing</span></Brand>
      <CollapseButton aria-label="Collapse menu"><ChevronLeft size={18} /></CollapseButton>
      <Nav>
        {navItems.map((n) => (
          <NavItem key={n.name} href={`#${n.name}`} $active={n.active} $expandable={n.expandable}>
            <NavIcon viewBox="0 0 24 24">{navGlyphs[n.name]}</NavIcon>
            {n.name}
            {n.expandable && <ChevronDown size={14} strokeWidth={3} />}
          </NavItem>
        ))}
      </Nav>
      <Account><Avatar>H</Avatar><span>Harpreet</span></Account>
    </Sidebar>
  );
}

function ApiSettings() {
  return (
    <Main>
      <Decor $side="left" $width={300} aria-hidden="true">
        <Dots rows={leftRows} originX={300} stepX={19} stepY={3.8} r={4} />
        <circle cx="195" cy="441" r="24" />
        <circle cx="69" cy="499" r="39" />
        <circle cx="100" cy="735" r="130" />
      </Decor>
      <Decor $side="right" $width={740} aria-hidden="true">
        <circle cx="124" cy="109" r="101" />
        <Dots rows={rightRows} originX={1180} stepX={22.4} stepY={4.3} r={4.5} />
      </Decor>
      <Content>
        <BackLink href="#settings"><ChevronLeft size={16} strokeWidth={3} />Settings</BackLink>
        <PageHeader>
          <h1>API</h1>
          <Button>Create</Button>
        </PageHeader>
        <Card $padTop={70}>
          <NameInput aria-label="Name" />
        </Card>
        <Card $padTop={76}>
          <AccessGrid>
            <AccessOption /><AccessOption /><AccessOption />
            <AccessOption $selected><AccessRadio name="access" defaultChecked />Custom</AccessOption>
          </AccessGrid>
          <Banner />
          <Permissions>
            <Table>
              <colgroup><LabelCol $w={276} /><col /></colgroup>
              <tbody>
                {features.map((f, i) => (
                  <tr key={i}>
                    <th scope="row"><label htmlFor={`feature-${i}`}>{f.name}</label></th>
                    <td><Checkbox id={`feature-${i}`} defaultChecked={f.checked} /></td>
                  </tr>
                ))}
              </tbody>
            </Table>
            <Table>
              <colgroup><LabelCol $w={189} /><col /><col /><col /></colgroup>
              <thead><tr><td /><th>None</th><th>View</th><th>View<br />&amp;<br />Modify</th></tr></thead>
              <tbody>
                {resources.map((r, i) => (
                  <tr key={i}>
                    <th scope="row">{r}</th>
                    {["None", "View", "View & Modify"].map((level) => (
                      <td key={level}><Radio name={`resource-${i}`} aria-label={`${r} ${level}`} defaultChecked={level === "View"} /></td>
                    ))}
                  </tr>
                ))}
              </tbody>
            </Table>
          </Permissions>
        </Card>
      </Content>
    </Main>
  );
}

function KeyDialog() {
  return (
    <Backdrop>
      <Dialog role="dialog" aria-modal="true" aria-labelledby="dialog-title">
        <DialogHeader>
          <h2 id="dialog-title">API key created.</h2>
          <button aria-label="Close dialog"><X size={28} strokeWidth={2.2} /></button>
        </DialogHeader>
        <DialogBody>
          <Alert role="alert">
            <svg width="26" height="24" viewBox="0 0 26 24">
              <path d="M11.300 1.900a2 2 0 0 1 3.400 0L25 20a1.800 1.800 0 0 1-1.600 2.600H2.600A1.800 1.800 0 0 1 1 20z" fill="#ffa549" />
              <path d="M13 9v5M13 17.500v1.500" stroke="#fff9ef" strokeWidth="2.600" />
            </svg>
            <p>Copy and save your password. Once you close this window you will not be able to retrieve it</p>
          </Alert>
          <FieldLabel id="key-label">API key</FieldLabel>
          <KeyValue aria-labelledby="key-label">{apiKey}</KeyValue>
          <CopyButton><MdFlipToFront size={32} /><span>Copy</span></CopyButton>
        </DialogBody>
        <DialogFooter><Button $soft>Close</Button></DialogFooter>
      </Dialog>
    </Backdrop>
  );
}

function WindowsTaskbar() {
  return (
    <Taskbar>
      <TaskSide>
        <Weather>
          <WeatherArt><Cloud /><Badge>1</Badge></WeatherArt>
          <span>10°C<small>Cloudy</small></span>
        </Weather>
      </TaskSide>
      <TaskCenter>
        <TaskButton $start aria-label="Start"><WindowsLogo /></TaskButton>
        <SearchBox>
          <Search size={20} strokeWidth={2.4} />
          <input type="search" placeholder="Search" aria-label="Search" />
        </SearchBox>
        {apps.map((a) => (
          <TaskButton key={a.name} aria-label={a.name} $active={a.active} $running={a.running}>{a.icon}</TaskButton>
        ))}
      </TaskCenter>
      <TaskSide $end>
        <TrayButton $w={40} aria-label="Show hidden icons"><ChevronUp size={20} /></TrayButton>
        <TrayButton $w={40} aria-label="OneDrive">
          <svg width="20" height="14" viewBox="0 0 20 14"><path d="M5 13a4 4 0 0 1-.5-8A6 6 0 0 1 15.500 5 4 4 0 0 1 15.500 13z" fill="#f2f2f2" stroke="#222" strokeWidth="1.300" /><path d="M4.500 5.500A6 6 0 0 1 15 5l-8 5z" fill="#8a8a8a" /></svg>
        </TrayButton>
        <TrayButton $w={40} aria-label="Updates">
          <svg width="22" height="22" viewBox="0 0 22 22" fill="none" stroke="#222" strokeWidth="1.400">
            <path d="M1.500 11C1.500 3 13 0 18 6.500M19 1.500v5.500h-5.500M10 20c-4 .5-6-1-8-3.500M1.500 21v-5h5.500" />
            <circle cx="16.500" cy="16.500" r="5" fill="#ff9800" stroke="none" />
          </svg>
        </TrayButton>
        <TrayButton $w={56} $text>ENG<br />US</TrayButton>
        <TrayButton $w={38} aria-label="Wi-Fi">
          <svg width="20" height="16" viewBox="0 0 20 16" fill="none" stroke="#222" strokeWidth="1.500" strokeLinecap="round">
            <path d="M1 6c5-5.500 13-5.500 18 0M4 9c3.500-3.800 8.500-3.800 12 0M6.800 11.800c2-2 4.400-2 6.400 0" /><circle cx="10" cy="14.300" r="1" fill="#222" />
          </svg>
        </TrayButton>
        <TrayButton $w={22} aria-label="Volume">
          <svg width="20" height="18" viewBox="0 0 20 18" fill="none" stroke="#222" strokeWidth="1.300" strokeLinejoin="round">
            <path d="M1 6.500h3L9 2v14l-5-4.500H1zM11.500 6c1.500 2 1.500 4 0 6M14 4c2.500 3 2.500 7 0 10M16.500 2c3.500 4 3.500 10 0 14" />
          </svg>
        </TrayButton>
        <TrayButton $w={38} aria-label="Battery">
          <svg width="20" height="13" viewBox="0 0 20 13"><rect x=".7" y=".7" width="16" height="11.600" rx="3" fill="none" stroke="#222" strokeWidth="1.300" /><rect x="3" y="3" width="3.500" height="7" rx="1" fill="#222" /><path d="M17.500 4.500a2 2 0 0 1 0 4z" fill="#222" stroke="#222" /></svg>
        </TrayButton>
        <TrayButton $w={90} $clock>10:10 PM<br />2023-12-09</TrayButton>
        <TrayButton $w={36} aria-label="Notifications">
          <svg width="18" height="20" viewBox="0 0 18 20"><path d="M0 16l2-3V8a6.500 6.500 0 0 1 13 0v5l2 3zM6 17.500h5a2.500 2 0 0 1-5 0z" fill="#1c1c1c" /><path d="M5.500 7h4l-4 5h4" stroke="#d5f7d7" fill="none" strokeWidth="1.400" /><path d="M12 1h5l-5 6h5" stroke="#1c1c1c" fill="none" strokeWidth="1.600" /></svg>
        </TrayButton>
      </TaskSide>
    </Taskbar>
  );
}

export default function App() {
  return (
    <Screen>
      <GlobalStyle />
      <BrowserChrome />
      <Page>
        <SideNav />
        <ApiSettings />
        <KeyDialog />
        <FeedbackTab>
          <span>Feedback</span>
          <svg width="24" height="20" viewBox="0 0 24 20">
            <path d="M0 0h22a2 2 0 0 1 2 2v15a2 2 0 0 1-2 2H5a2 2 0 0 1-2-2V4z" fill="#fff" />
            <path d="M8 5.500h2.200v2H8zM16.500 5.500h2.200v2h-2.200zM9.500 11h8a4 3.800 0 0 1-8 0z" fill="#f0394f" />
          </svg>
        </FeedbackTab>
        <ChatButton aria-label="Open chat">
          <svg width="27" height="30" viewBox="0 0 27 30">
            <path d="M3 0h21a3 3 0 0 1 3 3v27l-7-3H3a3 3 0 0 1-3-3V3a3 3 0 0 1 3-3z" fill="#fff" />
            <path d="M4.500 19.500c5 4 13 4 18 0" fill="none" stroke="#2799fc" strokeWidth="1.800" strokeLinecap="round" />
          </svg>
        </ChatButton>
      </Page>
      <WindowsTaskbar />
    </Screen>
  );
}
